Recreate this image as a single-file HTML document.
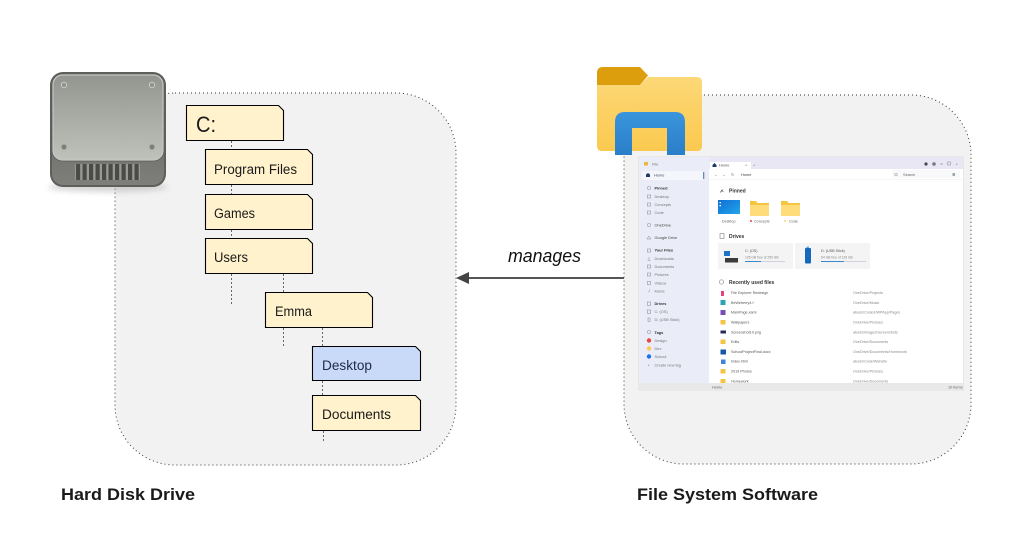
<!DOCTYPE html>
<html><head><meta charset="utf-8">
<style>
html,body{margin:0;padding:0;background:#fff;width:1013px;height:556px;overflow:hidden}
svg{display:block}
text{font-family:"Liberation Sans",sans-serif}
.lbl{font-size:13.5px;fill:#1a1a1a}
.sb{font-size:3.9px;fill:#777}
.sbh{font-size:3.9px;fill:#333;font-weight:bold}
.h{font-size:5px;fill:#333;font-weight:bold}
.r{font-size:3.7px;fill:#555}
.p{font-size:3.7px;fill:#888}
.con{stroke:#666;stroke-width:1;stroke-dasharray:2 2;fill:none}
</style></head>
<body>
<svg width="1013" height="556" viewBox="0 0 1013 556" xmlns="http://www.w3.org/2000/svg">
<defs>
<linearGradient id="face" x1="0" y1="0" x2="0" y2="1"><stop offset="0" stop-color="#939590"/><stop offset="1" stop-color="#bfc1bb"/></linearGradient>
<linearGradient id="base" x1="0" y1="0" x2="0" y2="1"><stop offset="0" stop-color="#6a6b67"/><stop offset="1" stop-color="#7e7f7b"/></linearGradient>
<linearGradient id="fold" x1="0" y1="0" x2="0" y2="1"><stop offset="0" stop-color="#fcd877"/><stop offset="1" stop-color="#fbc94f"/></linearGradient>
<linearGradient id="blue" x1="0" y1="0" x2="0" y2="1"><stop offset="0" stop-color="#3a95dc"/><stop offset="1" stop-color="#2a7fc8"/></linearGradient>
<linearGradient id="thumb" x1="0" y1="0" x2="1" y2="1"><stop offset="0" stop-color="#0d6fd6"/><stop offset="1" stop-color="#25a5e8"/></linearGradient>
<filter id="bl" x="-20%" y="-50%" width="140%" height="200%"><feGaussianBlur stdDeviation="3"/></filter>
<filter id="soft"><feGaussianBlur stdDeviation="0.35"/></filter>
</defs>

<!-- panels -->
<rect x="115" y="93" width="341" height="372" rx="60" ry="60" fill="#f2f2f2" stroke="#333" stroke-width="1" stroke-dasharray="1 3"/>
<rect x="624" y="95" width="347" height="369" rx="60" ry="60" fill="#f2f2f2" stroke="#333" stroke-width="1" stroke-dasharray="1 3"/>

<!-- connectors -->
<path class="con" d="M231.5 141V149M231.5 185V194M231.5 230V238M231.5 274V306M283.5 274V292M283.5 328V346M322.5 328V346M322.5 381V395M323.5 431V441"/>

<!-- HDD -->
<ellipse cx="108" cy="187" rx="60" ry="5" fill="#aaa" opacity=".5" filter="url(#bl)"/>
<rect x="50" y="72" width="116" height="115" rx="13" fill="#5e5f5b"/>
<rect x="52" y="120" width="112" height="65" rx="11" fill="url(#base)"/>
<rect x="51.500" y="73.500" width="113" height="88" rx="11" fill="#5f605c"/>
<rect x="53" y="75" width="110" height="85" rx="9.500" fill="url(#face)" stroke="#c6c7c3" stroke-width="1.200"/>
<g fill="#8e908b" stroke="#c9cac6" stroke-width="1"><circle cx="64" cy="85" r="2.600"/><circle cx="152" cy="85" r="2.600"/></g>
<g fill="#7d7f7a" stroke="#aeb0ab" stroke-width=".8"><circle cx="64" cy="147" r="2.800"/><circle cx="152" cy="147" r="2.800"/></g>
<rect x="75" y="164" width="65" height="16" fill="#999a96"/>
<g fill="#4a4b48">
<rect x="76" y="164" width="4.200" height="16"/><rect x="82.500" y="164" width="4.200" height="16"/><rect x="89" y="164" width="4.200" height="16"/><rect x="95.500" y="164" width="4.200" height="16"/><rect x="102" y="164" width="4.200" height="16"/><rect x="108.500" y="164" width="4.200" height="16"/><rect x="115" y="164" width="4.200" height="16"/><rect x="121.500" y="164" width="4.200" height="16"/><rect x="128" y="164" width="4.200" height="16"/><rect x="134.500" y="164" width="4.200" height="16"/>
</g>

<!-- tree boxes -->
<g stroke="#000" stroke-width="1.100" fill="#fff2cc">
<path d="M186.500 105.500H278.500L283.500 110.500V140.500H186.500Z"/>
<path d="M205.500 149.500H307.500L312.500 154.500V184.500H205.500Z"/>
<path d="M205.500 194.500H307.500L312.500 199.500V229.500H205.500Z"/>
<path d="M205.500 238.500H307.500L312.500 243.500V273.500H205.500Z"/>
<path d="M265.500 292.500H367.500L372.500 297.500V327.500H265.500Z"/>
<path d="M312.500 346.500H415.500L420.500 351.500V380.500H312.500Z" fill="#c9daf8"/>
<path d="M312.500 395.500H415.500L420.500 400.500V430.500H312.500Z"/>
</g>
<text x="196" y="132" font-size="22" fill="#1a1a1a" textLength="20" lengthAdjust="spacingAndGlyphs">C:</text>
<text class="lbl" x="214" y="174" textLength="83" lengthAdjust="spacingAndGlyphs">Program Files</text>
<text class="lbl" x="214" y="218" textLength="41" lengthAdjust="spacingAndGlyphs">Games</text>
<text class="lbl" x="214" y="262" textLength="34" lengthAdjust="spacingAndGlyphs">Users</text>
<text class="lbl" x="275" y="316" textLength="37" lengthAdjust="spacingAndGlyphs">Emma</text>
<text class="lbl" x="322" y="370" textLength="50" lengthAdjust="spacingAndGlyphs" style="fill:#1c2a48">Desktop</text>
<text class="lbl" x="322" y="419" textLength="69" lengthAdjust="spacingAndGlyphs">Documents</text>

<!-- arrow -->
<path d="M469 278H624" stroke="#555" stroke-width="2"/>
<path d="M456 278L469 272V284Z" fill="#444"/>
<text x="508" y="262" font-size="18" font-style="italic" fill="#111" textLength="73" lengthAdjust="spacingAndGlyphs">manages</text>

<!-- labels -->
<text x="61" y="500" font-size="17" font-weight="bold" fill="#1a1a1a" textLength="134" lengthAdjust="spacingAndGlyphs">Hard Disk Drive</text>
<text x="637" y="500" font-size="17" font-weight="bold" fill="#1a1a1a" textLength="181" lengthAdjust="spacingAndGlyphs">File System Software</text>

<!-- window -->
<g filter="url(#soft)">
<rect x="638" y="156" width="326" height="235" fill="#dcdcdc" opacity=".5"/>
<rect x="639" y="157" width="324" height="234" fill="#fff"/>
<rect x="639" y="157" width="324" height="12" fill="#e9e7f4"/>
<rect x="639" y="157" width="70" height="226" fill="#eaecf8"/>
<rect x="642" y="171" width="62" height="9" rx="1.500" fill="#f5f6fc"/>
<rect x="703.300" y="172" width=".9" height="7" fill="#2b5c9e"/>
<rect x="710" y="162" width="41" height="7" fill="#fff"/>
<rect x="709" y="169" width="254" height="10" fill="#fff"/>
<rect x="709" y="179" width="254" height=".6" fill="#eee"/>
<rect x="892" y="170" width="68" height="8" fill="#f9f9fb"/>

<!-- title row -->
<rect x="644" y="162" width="4" height="3.500" fill="#e8b93f"/>
<text class="sb" x="652" y="165.500">File</text>
<path d="M712.500 165L714.500 163L716.500 165V167H712.500Z" fill="#1f3b66"/>
<text class="sb" x="719" y="166.500" style="fill:#555">Home</text>
<text class="sb" x="745" y="166.500">×</text><text class="sb" x="753" y="166.500">+</text>
<text class="sb" x="714" y="176">←</text><text class="sb" x="722" y="176">→</text><text class="sb" x="731" y="176">↻</text>
<text class="sb" x="741" y="176" style="fill:#444">Home</text>
<circle cx="896" cy="174.500" r="1.300" fill="none" stroke="#888" stroke-width=".5"/>
<text class="sb" x="903" y="176" style="fill:#666">Search</text>
<rect x="952.500" y="173" width="2.500" height="3" fill="#9aa"/>
<circle cx="926" cy="164" r="1.600" fill="#445"/><circle cx="934" cy="164" r="1.800" fill="#778"/>
<path d="M940 164H943" stroke="#888" stroke-width=".6"/>
<rect x="947.500" y="162" width="3" height="3" fill="none" stroke="#888" stroke-width=".5"/>
<text class="sb" x="955.500" y="165.500">×</text>

<!-- sidebar -->
<path d="M646 177V174.500L648 173L650 174.500V177H646Z" fill="#1f3b66"/>
<text class="sb" x="654" y="176.500" style="fill:#3a4a66">Home</text>
<g fill="none" stroke="#888" stroke-width=".5">
<circle cx="649" cy="188" r="1.700"/><rect x="647.300" y="195" width="3.400" height="3"/><rect x="647.300" y="203" width="3.400" height="3"/><rect x="647.300" y="211" width="3.400" height="3"/>
<circle cx="649" cy="225" r="1.700"/><path d="M649 236L651 239H647Z"/><rect x="647.300" y="249" width="3.400" height="3"/><path d="M649 257V260M647.500 260.500H650.500"/><rect x="647.300" y="265" width="3.400" height="3"/><rect x="647.300" y="273" width="3.400" height="3"/><rect x="647.300" y="281.500" width="3.400" height="3"/><path d="M650 289.500L648.500 292.500"/><rect x="647.300" y="302" width="3.400" height="3.400"/><rect x="647.300" y="310" width="3.400" height="3.400"/><rect x="648" y="318" width="2" height="3.400"/><circle cx="649" cy="332" r="1.700"/>
</g>
<circle cx="649" cy="340.500" r="2.200" fill="#e8453c"/><circle cx="649" cy="348.500" r="2.200" fill="#fbc94f"/><circle cx="649" cy="356.500" r="2.200" fill="#1a73e8"/>
<text class="sb" x="647.500" y="366.500" style="fill:#668">+</text>
<text class="sbh" x="654.500" y="189.500">Pinned</text>
<text class="sb" x="654.500" y="198">Desktop</text><text class="sb" x="654.500" y="206">Concepts</text><text class="sb" x="654.500" y="214">Code</text>
<text class="sb" x="654.500" y="226.500" style="fill:#444">OneDrive</text><text class="sb" x="654.500" y="239" style="fill:#444">Google Drive</text>
<text class="sbh" x="654.500" y="251.500">Your Files</text>
<text class="sb" x="654.500" y="260">Downloads</text><text class="sb" x="654.500" y="268">Documents</text><text class="sb" x="654.500" y="276">Pictures</text><text class="sb" x="654.500" y="284.500">Videos</text><text class="sb" x="654.500" y="292.500">Music</text>
<text class="sbh" x="654.500" y="305">Drives</text>
<text class="sb" x="654.500" y="313">C: (OS)</text><text class="sb" x="654.500" y="321">D: (USB Stick)</text>
<text class="sbh" x="654.500" y="334">Tags</text>
<text class="sb" x="654.500" y="342">Design</text><text class="sb" x="654.500" y="350">Dev</text><text class="sb" x="654.500" y="358">School</text><text class="sb" x="654.500" y="366.500">Create new tag</text>

<!-- pinned -->
<path d="M720 192.500L723 189.500M721 190L723.500 192" stroke="#555" stroke-width=".6" fill="none"/>
<text class="h" x="729" y="192.500">Pinned</text>
<rect x="718" y="200" width="22" height="14" fill="url(#thumb)"/>
<rect x="719.500" y="202" width="1.500" height="1.300" fill="#fff"/><rect x="719.500" y="205" width="1.500" height="1.300" fill="#fff"/>
<path d="M750 201H756L757.500 203H769V216H750Z" fill="#f5c542"/><path d="M750 205H769V216H750Z" fill="#fddc79"/>
<path d="M781 201H787L788.500 203H800V216H781Z" fill="#f5c542"/><path d="M781 205H800V216H781Z" fill="#fddc79"/>
<text class="p" x="722" y="222.500" style="fill:#666">Desktop</text>
<circle cx="751" cy="221" r="1" fill="#e8453c"/><text class="p" x="754" y="222.500" style="fill:#666">Concepts</text>
<circle cx="785" cy="221" r=".9" fill="#fbc94f"/><text class="p" x="789" y="222.500" style="fill:#666">Code</text>

<!-- drives -->
<rect x="720" y="233.500" width="4" height="5" fill="none" stroke="#666" stroke-width=".5"/>
<text class="h" x="729" y="238">Drives</text>
<rect x="718" y="243" width="75" height="26" fill="#f4f4f4"/>
<rect x="795" y="243" width="75" height="26" fill="#f4f4f4"/>
<rect x="724" y="251" width="6" height="5" fill="#1a73c8"/>
<rect x="725" y="258" width="13" height="4.500" fill="#3a3a3a"/>
<text class="p" x="745" y="252" style="fill:#555">C: (OS)</text>
<text class="p" x="745" y="258.500" style="font-size:3.300px">125 GB free of 250 GB</text>
<rect x="745" y="261" width="40" height=".9" fill="#ccd"/><rect x="745" y="261" width="16" height=".9" fill="#2a7fc8"/>
<path d="M805 249H809V246.500H807Z" fill="#6ab0e8"/>
<rect x="805" y="248" width="6" height="15.500" rx="1" fill="#1668bd"/>
<text class="p" x="821" y="252" style="fill:#555">D: (USB Stick)</text>
<text class="p" x="821" y="258.500" style="font-size:3.300px">64 GB free of 128 GB</text>
<rect x="821" y="261" width="45" height=".9" fill="#ccd"/><rect x="821" y="261" width="23" height=".9" fill="#2a7fc8"/>

<!-- recent -->
<circle cx="721.500" cy="282" r="2.200" fill="none" stroke="#666" stroke-width=".5"/>
<text class="h" x="729" y="284">Recently used files</text>

<rect x="721" y="291" width="3" height="5" fill="#e0457b"/>
<rect x="720.500" y="300" width="5" height="5" fill="#2fa3b8"/>
<rect x="720.500" y="310" width="5" height="5" fill="#7a4fb5"/>
<path d="M720.500 320H725.500V324.500H720.500Z" fill="#f4c542"/>
<rect x="720.500" y="330.500" width="5.500" height="3" fill="#2a2a5a"/>
<path d="M720.500 339.500H725.500V344H720.500Z" fill="#f4c542"/>
<rect x="720.500" y="349.500" width="5.500" height="5" fill="#1958a8"/>
<rect x="721" y="359.500" width="4.500" height="4.500" fill="#3f82d8"/>
<path d="M720.500 369H725.500V373.500H720.500Z" fill="#f4c542"/>
<path d="M720.500 379H725.500V383H720.500Z" fill="#f4c542"/>

<text class="r" x="731" y="294">File Explorer Redesign</text><text class="p" x="853" y="294">OneDrive/Projects</text>
<text class="r" x="731" y="304">BeWeberry4.f</text><text class="p" x="853" y="304">OneDrive/Music</text>
<text class="r" x="731" y="313.700">MainPage.xaml</text><text class="p" x="853" y="313.700">abuds/Code/UWPApp/Pages</text>
<text class="r" x="731" y="323.700">Wallpapers</text><text class="p" x="853" y="323.700">OneDrive/Pictures</text>
<text class="r" x="731" y="333.300">Screenshot10.png</text><text class="p" x="853" y="333.300">abuds/Images/Screenshots</text>
<text class="r" x="731" y="343">Edits</text><text class="p" x="853" y="343">OneDrive/Documents</text>
<text class="r" x="731" y="353">SchoolProjectFinal.docx</text><text class="p" x="853" y="353">OneDrive/Documents/Homework</text>
<text class="r" x="731" y="362.700">Index.html</text><text class="p" x="853" y="362.700">abuds/Code/Website</text>
<text class="r" x="731" y="372.700">2019 Photos</text><text class="p" x="853" y="372.700">OneDrive/Pictures</text>
<text class="r" x="731" y="382.400">Homework</text><text class="p" x="853" y="382.400">OneDrive/Documents</text>
<rect x="639" y="383" width="324" height="8" fill="#e9e9e9"/>
<text class="sb" x="712" y="388.500" style="fill:#666">Home</text>
<text class="sb" x="948" y="388.500" style="fill:#666">10 items</text>
</g>

<!-- folder icon -->
<g filter="url(#soft)">
<path d="M597 73Q597 67 603 67H640L648 75.500L640 85H597Z" fill="#dc9e0c"/>
<path d="M597 85H640L648 77H697Q702 77 702 82V146Q702 151 697 151H602Q597 151 597 146Z" fill="url(#fold)"/>
<path d="M615 155V122Q615 112 625 112H675Q685 112 685 122V155H667V128H632V155Z" fill="url(#blue)"/>
</g>
</svg>
</body></html>
